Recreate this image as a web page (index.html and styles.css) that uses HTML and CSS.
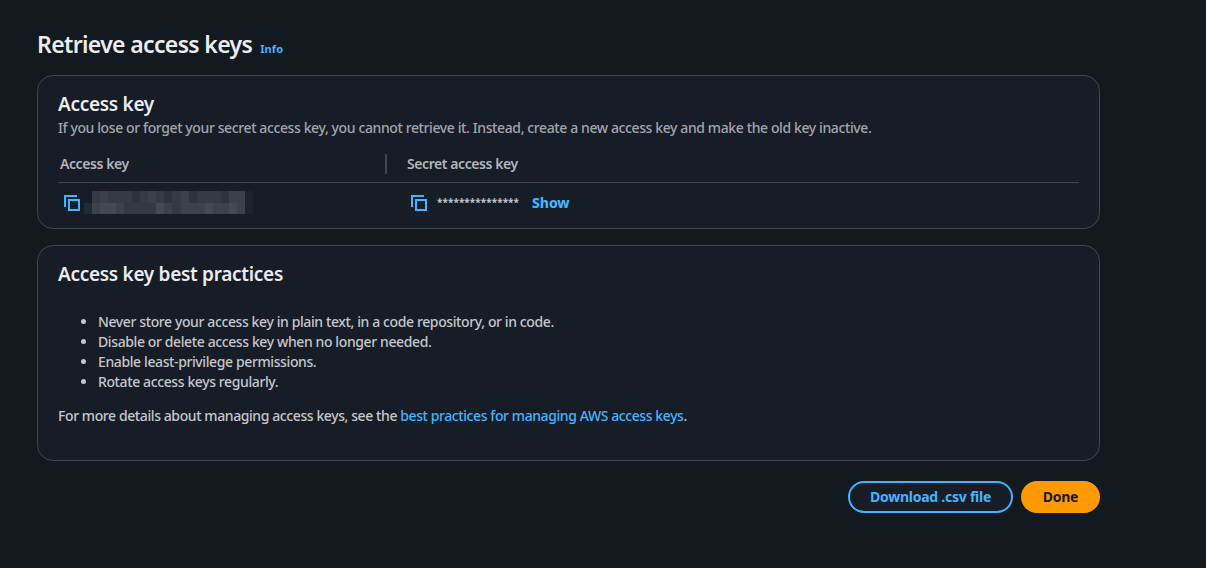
FILE: index.html
```
<!DOCTYPE html>
<html lang="en">
<head>
<meta charset="utf-8">
<title>Retrieve access keys</title>
<link rel="stylesheet" href="styles.css">
</head>
<body>
<main class="page">
  <header class="page-header">
    <h1 class="page-title">Retrieve access keys</h1>
    <a class="info-link">Info</a>
  </header>

  <section class="card card-key">
    <h2 class="card-title">Access key</h2>
    <p class="card-description">If you lose or forget your secret access key, you cannot retrieve it. Instead, create a new access key and make the old key inactive.</p>
    <div class="key-table">
      <div class="table-head">
        <div class="head-cell head-first">Access key</div>
        <div class="head-cell head-second">Secret access key</div>
      </div>
      <div class="table-row">
        <div class="cell cell-first">
          <svg class="copy-icon" width="16" height="16" viewBox="0 0 16 16" fill="none" stroke="currentColor" stroke-width="2"><path d="M13 1H1v11"/><path d="M5 5h10v10H5z"/></svg>
          <svg class="masked-key" width="169" height="23" viewBox="0 0 169 23" shape-rendering="crispEdges">
            <path fill="#343b43" d="M8 0h153v12H8z"/><path fill="#3c4249" d="M8 12h153v11H8z"/>
            <path fill="#222930" d="M0 12h8v11H0z"/><path fill="#1c232a" d="M161 0h8v23h-8z"/>
            <path fill="#3a4148" d="M16 0h8v12h-8zM64 0h8v12h-8zM97 0h8v12h-8zM145 0h16v12h-16z"/>
            <path fill="#2d343b" d="M48 0h8v12h-8zM80 0h8v12h-8zM105 0h8v12h-8zM137 0h8v12h-8z"/>
            <path fill="#434950" d="M16 12h16v11H16zM72 12h8v11h-8zM121 12h8v11h-8zM145 12h8v11h-8z"/>
            <path fill="#343a41" d="M40 12h32v11H40zM88 12h9v11h-9z"/>
          </svg>
        </div>
        <div class="cell cell-second">
          <svg class="copy-icon" width="16" height="16" viewBox="0 0 16 16" fill="none" stroke="currentColor" stroke-width="2"><path d="M13 1H1v11"/><path d="M5 5h10v10H5z"/></svg>
          <span class="secret">***************</span>
          <a class="show-link">Show</a>
        </div>
      </div>
    </div>
  </section>

  <section class="card card-practices">
    <h2 class="card-title">Access key best practices</h2>
    <ul class="practices">
      <li>Never store your access key in plain text, in a code repository, or in code.</li>
      <li>Disable or delete access key when no longer needed.</li>
      <li>Enable least-privilege permissions.</li>
      <li>Rotate access keys regularly.</li>
    </ul>
    <p class="more">For more details about managing access keys, see the <a class="text-link">best practices for managing AWS access keys</a>.</p>
  </section>

  <footer class="actions">
    <button class="button button-normal">Download .csv file</button>
    <button class="button button-primary">Done</button>
  </footer>
</main>
</body>
</html>
```
FILE: styles.css
```
* { box-sizing: border-box; }
body {
  margin: 0;
  min-height: 568px;
  background: #12191f;
  color: #c6c6cd;
  font-family: "Noto Sans", "Open Sans", sans-serif;
  font-size: 14px;
  font-weight: 500;
  line-height: 20px;
}
h1, h2, p, ul { margin: 0; }
a { color: #42b4ff; }
.page { width: 1063px; margin-left: 37px; padding-top: 29px; white-space: nowrap; }
.page-header { display: flex; align-items: baseline; gap: 8px; height: 46px; }
.page-title { color: #ebebf0; font-size: 23px; line-height: 30px; font-weight: 600; letter-spacing: -0.65px; }
.info-link { font-size: 11px; font-weight: 700; letter-spacing: 0.1px; }
.card { background: #161d26; border: 1px solid #424650; border-radius: 16px; padding: 0 20px; }
.card-key { height: 154px; padding-top: 16px; }
.card-title { color: #ebebf0; font-size: 19px; line-height: 24px; font-weight: 600; letter-spacing: -0.3px; }
.card-description { color: #a4a4ad; letter-spacing: -0.39px; margin-top: 2px; }
.key-table { margin-top: 12px; }
.table-head { display: flex; height: 33px; border-bottom: 1px solid #424650; padding-top: 4px; }
.head-cell { color: #b4b4bb; font-weight: 600; letter-spacing: -0.42px; height: 20px; }
.head-first { width: 329px; padding-left: 2px; border-right: 2px solid #424650; }
.head-second { padding-left: 20px; }
.table-row { display: flex; height: 40px; }
.cell { display: flex; align-items: center; }
.cell-first { width: 347px; padding-left: 6px; gap: 4px; }
.cell-second { padding-left: 6px; }
.copy-icon { color: #42b4ff; flex: none; }
.masked-key { margin-bottom: 2px; }
.secret { margin: 0 0 2px 10px; width: 95px; font-size: 10px; font-weight: 700; letter-spacing: 0.05px; }
.show-link { font-weight: 800; letter-spacing: -0.1px; }
.card-practices { height: 216px; margin-top: 16px; padding-top: 16px; }
.practices { margin-top: 26px; padding-left: 40px; letter-spacing: -0.39px; }
.more { margin-top: 14px; letter-spacing: -0.41px; }
.actions { display: flex; justify-content: flex-end; gap: 8px; margin-top: 20px; }
.button { height: 32px; padding: 0; border-radius: 16px; font: 700 14px/20px "Noto Sans", "Open Sans", sans-serif; letter-spacing: -0.25px; }
.button-normal { width: 165px; color: #42b4ff; background: #161d26; border: 2px solid #42b4ff; }
.button-primary { width: 79px; color: #16191f; background: #ff9900; border: 0; }
```
